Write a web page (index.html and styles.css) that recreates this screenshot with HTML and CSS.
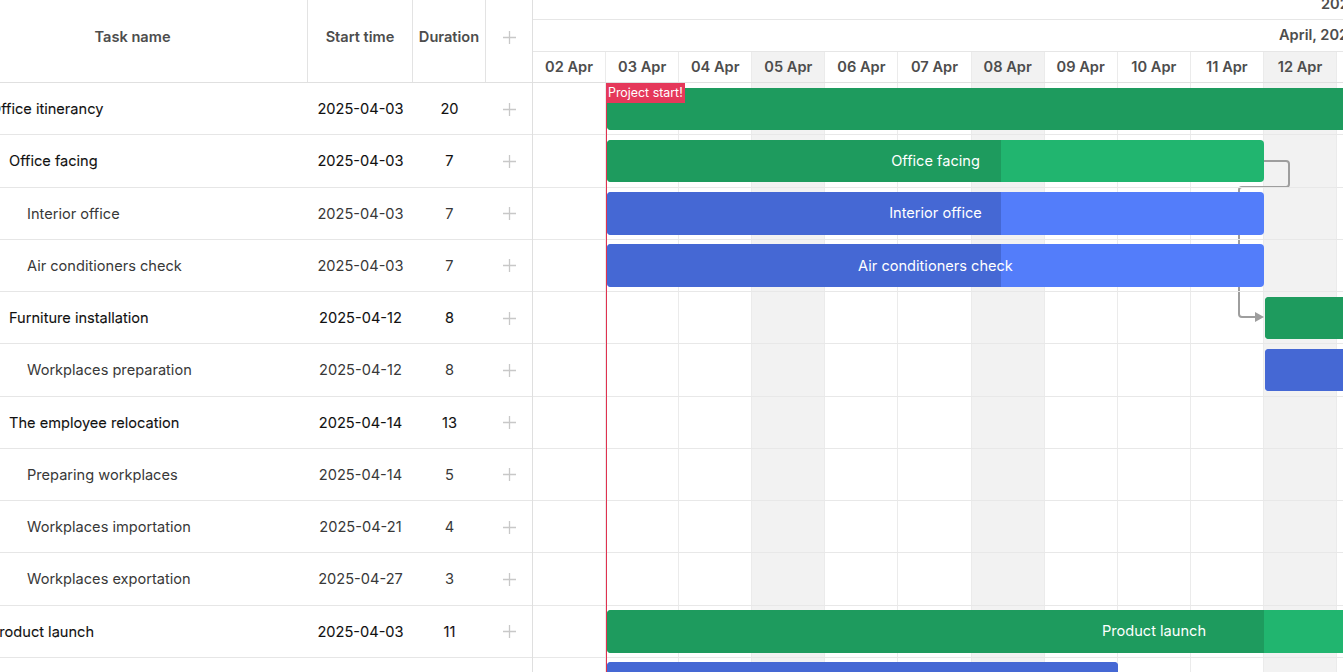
FILE: index.html
```html
<!DOCTYPE html>
<html lang="en">
<head>
  <meta charset="UTF-8">
  <meta name="viewport" content="width=device-width, initial-scale=1.0">
  <title>Gantt</title>
  <link rel="stylesheet" href="styles.css">
</head>
<body>
  <div class="gantt">
    <div class="grid">
      <div class="grid-inner">
        <div class="grid-head">
          <div class="cell col-name">Task name</div>
          <div class="cell col-start">Start time</div>
          <div class="cell col-dur">Duration</div>
          <div class="cell col-add"><svg class="plus" viewBox="0 0 14 14"><path d="M7 0v14M0 7h14"/></svg></div>
        </div>
        <div class="grid-row parent">
          <div class="cell col-name lvl0">Office itinerancy</div>
          <div class="cell col-start">2025-04-03</div>
          <div class="cell col-dur">20</div>
          <div class="cell col-add"><svg class="plus" viewBox="0 0 14 14"><path d="M7 0v14M0 7h14"/></svg></div>
        </div>
        <div class="grid-row parent">
          <div class="cell col-name lvl1">Office facing</div>
          <div class="cell col-start">2025-04-03</div>
          <div class="cell col-dur">7</div>
          <div class="cell col-add"><svg class="plus" viewBox="0 0 14 14"><path d="M7 0v14M0 7h14"/></svg></div>
        </div>
        <div class="grid-row">
          <div class="cell col-name lvl2">Interior office</div>
          <div class="cell col-start">2025-04-03</div>
          <div class="cell col-dur">7</div>
          <div class="cell col-add"><svg class="plus" viewBox="0 0 14 14"><path d="M7 0v14M0 7h14"/></svg></div>
        </div>
        <div class="grid-row">
          <div class="cell col-name lvl2">Air conditioners check</div>
          <div class="cell col-start">2025-04-03</div>
          <div class="cell col-dur">7</div>
          <div class="cell col-add"><svg class="plus" viewBox="0 0 14 14"><path d="M7 0v14M0 7h14"/></svg></div>
        </div>
        <div class="grid-row parent">
          <div class="cell col-name lvl1">Furniture installation</div>
          <div class="cell col-start">2025-04-12</div>
          <div class="cell col-dur">8</div>
          <div class="cell col-add"><svg class="plus" viewBox="0 0 14 14"><path d="M7 0v14M0 7h14"/></svg></div>
        </div>
        <div class="grid-row">
          <div class="cell col-name lvl2">Workplaces preparation</div>
          <div class="cell col-start">2025-04-12</div>
          <div class="cell col-dur">8</div>
          <div class="cell col-add"><svg class="plus" viewBox="0 0 14 14"><path d="M7 0v14M0 7h14"/></svg></div>
        </div>
        <div class="grid-row parent">
          <div class="cell col-name lvl1">The employee relocation</div>
          <div class="cell col-start">2025-04-14</div>
          <div class="cell col-dur">13</div>
          <div class="cell col-add"><svg class="plus" viewBox="0 0 14 14"><path d="M7 0v14M0 7h14"/></svg></div>
        </div>
        <div class="grid-row">
          <div class="cell col-name lvl2">Preparing workplaces</div>
          <div class="cell col-start">2025-04-14</div>
          <div class="cell col-dur">5</div>
          <div class="cell col-add"><svg class="plus" viewBox="0 0 14 14"><path d="M7 0v14M0 7h14"/></svg></div>
        </div>
        <div class="grid-row">
          <div class="cell col-name lvl2">Workplaces importation</div>
          <div class="cell col-start">2025-04-21</div>
          <div class="cell col-dur">4</div>
          <div class="cell col-add"><svg class="plus" viewBox="0 0 14 14"><path d="M7 0v14M0 7h14"/></svg></div>
        </div>
        <div class="grid-row">
          <div class="cell col-name lvl2">Workplaces exportation</div>
          <div class="cell col-start">2025-04-27</div>
          <div class="cell col-dur">3</div>
          <div class="cell col-add"><svg class="plus" viewBox="0 0 14 14"><path d="M7 0v14M0 7h14"/></svg></div>
        </div>
        <div class="grid-row parent">
          <div class="cell col-name lvl0">Product launch</div>
          <div class="cell col-start">2025-04-03</div>
          <div class="cell col-dur">11</div>
          <div class="cell col-add"><svg class="plus" viewBox="0 0 14 14"><path d="M7 0v14M0 7h14"/></svg></div>
        </div>
        <div class="grid-row"></div>
      </div>
    </div>

    <div class="chart">
      <div class="scale">
        <div class="scale-year">2025</div>
        <div class="scale-month">April, 2025</div>
        <div class="scale-days">
          <div class="day">02 Apr</div>
          <div class="day">03 Apr</div>
          <div class="day">04 Apr</div>
          <div class="day shade">05 Apr</div>
          <div class="day">06 Apr</div>
          <div class="day">07 Apr</div>
          <div class="day shade">08 Apr</div>
          <div class="day">09 Apr</div>
          <div class="day">10 Apr</div>
          <div class="day">11 Apr</div>
          <div class="day shade">12 Apr</div>
          <div class="day"></div>
        </div>
      </div>

      <div class="data">
        <div class="columns">
          <div class="col"></div>
          <div class="col"></div>
          <div class="col"></div>
          <div class="col shade"></div>
          <div class="col"></div>
          <div class="col"></div>
          <div class="col shade"></div>
          <div class="col"></div>
          <div class="col"></div>
          <div class="col"></div>
          <div class="col shade"></div>
          <div class="col"></div>
        </div>

        <svg class="links" width="810" height="600">
          <path d="M731 78H753Q756 78 756 81V101Q756 104 753 104H709Q706 104 706 107V231Q706 234 709 234H724"/>
          <polygon points="722,229 731,234 722,239"/>
        </svg>

        <div class="row">
          <div class="bar green" style="left:74px;width:1300px"><div class="progress" style="width:1300px"></div></div>
        </div>
        <div class="row">
          <div class="bar green" style="left:74px;width:657px"><div class="progress" style="width:394px"></div><span class="bar-text">Office facing</span></div>
        </div>
        <div class="row">
          <div class="bar blue" style="left:74px;width:657px"><div class="progress" style="width:394px"></div><span class="bar-text">Interior office</span></div>
        </div>
        <div class="row">
          <div class="bar blue" style="left:74px;width:657px"><div class="progress" style="width:394px"></div><span class="bar-text">Air conditioners check</span></div>
        </div>
        <div class="row">
          <div class="bar green" style="left:732px;width:585px"><div class="progress" style="width:585px"></div></div>
        </div>
        <div class="row">
          <div class="bar blue" style="left:732px;width:585px"><div class="progress" style="width:585px"></div></div>
        </div>
        <div class="row"></div>
        <div class="row"></div>
        <div class="row"></div>
        <div class="row"></div>
        <div class="row">
          <div class="bar green" style="left:74px;width:1094px"><div class="progress" style="width:657px"></div><span class="bar-text">Product launch</span></div>
        </div>
        <div class="row">
          <div class="bar blue" style="left:74px;width:511px"><div class="progress" style="width:511px"></div></div>
        </div>

        <div class="marker">
          <div class="marker-line"></div>
          <div class="marker-label">Project start!</div>
        </div>
      </div>
    </div>
  </div>
</body>
</html>
```

FILE: styles.css
```css
* {
  box-sizing: border-box;
}
body {
  margin: 0;
  font-family: Inter, "Noto Sans", sans-serif;
  font-size: 14.6px;
  color: #383838;
  background: white;
  overflow: hidden;
}
.gantt {
  display: flex;
  height: 672px;
  overflow: hidden;
}

/* grid */
.grid {
  width: 533px;
  flex: none;
  overflow: hidden;
  border-right: 1px solid #dfdfdf;
}
.grid-inner {
  margin-left: -42px;
  width: 574px;
}
.grid-head {
  display: flex;
  height: 83px;
  border-bottom: 1px solid #e0e0e0;
}
.grid-head .cell {
  display: flex;
  align-items: center;
  justify-content: center;
  padding-bottom: 8px;
  font-weight: 600;
  color: #4d4d4d;
}
.grid-head .col-name,
.grid-head .col-start,
.grid-head .col-dur {
  border-right: 1px solid #e3e3e3;
}
.col-name {
  width: 350px;
}
.col-start {
  width: 105px;
}
.col-dur {
  width: 73px;
}
.col-add {
  width: 46px;
}
.grid-row {
  display: flex;
  align-items: center;
  height: 52.25px;
  padding-top: 1px;
  border-bottom: 1px solid #e6e6e6;
}
.grid-row .cell {
  white-space: nowrap;
}
.grid-row .col-start,
.grid-row .col-dur,
.grid-row .col-add {
  text-align: center;
}
.grid-row.parent {
  color: #111;
  -webkit-text-stroke: 0.1px #111;
}
.col-add {
  display: flex;
  justify-content: center;
  align-items: center;
}
.lvl0 {
  padding-left: 32px;
}
.lvl1 {
  padding-left: 51px;
}
.lvl2 {
  padding-left: 69px;
}
.plus {
  width: 13px;
  height: 13px;
  fill: none;
  stroke: #c8c8c8;
  stroke-width: 1.4;
}

/* chart */
.chart {
  flex: 1;
  overflow: hidden;
}
.scale {
  font-weight: 600;
  color: #4d4d4d;
  white-space: nowrap;
}
.scale-year {
  height: 20px;
  line-height: 8px;
  padding-left: 788px;
  border-bottom: 1px solid #e6e6e6;
  overflow: hidden;
}
.scale-month {
  height: 32px;
  line-height: 31px;
  padding-left: 746px;
  border-bottom: 1px solid #e6e6e6;
}
.scale-days {
  display: flex;
  height: 31px;
  border-bottom: 1px solid #e0e0e0;
}
.day {
  flex: none;
  width: 73.1px;
  line-height: 30px;
  text-align: center;
  border-right: 1px solid #ebebeb;
}
.shade {
  background: #f2f2f2;
}
.data {
  position: relative;
  height: 589px;
}
.columns {
  position: absolute;
  top: 0;
  left: 0;
  bottom: 0;
  display: flex;
}
.col {
  flex: none;
  width: 73.1px;
  border-right: 1px solid #ebebeb;
}
.links {
  position: absolute;
  top: 0;
  left: 0;
}
.links path {
  fill: none;
  stroke: #9e9e9e;
  stroke-width: 2;
}
.links polygon {
  fill: #9e9e9e;
}
.row {
  position: relative;
  height: 52.25px;
  border-bottom: 1px solid #e8e8e8;
}
.bar {
  position: absolute;
  top: 4.5px;
  height: 42.5px;
  border-radius: 4px;
  overflow: hidden;
  display: flex;
  align-items: center;
  justify-content: center;
}
.bar.green {
  background: #21b56f;
}
.bar.green .progress {
  background: #1e9b5e;
}
.bar.blue {
  background: #537dfa;
}
.bar.blue .progress {
  background: #4568d4;
}
.progress {
  position: absolute;
  top: 0;
  left: 0;
  bottom: 0;
}
.bar-text {
  position: relative;
  color: white;
  white-space: nowrap;
}
.marker {
  position: absolute;
  top: 0;
  left: 73px;
  bottom: 0;
}
.marker-line {
  position: absolute;
  top: 0;
  bottom: 0;
  left: 0;
  width: 1px;
  background: #e0324f;
}
.marker-label {
  position: absolute;
  top: 0;
  left: 0;
  padding: 0 2px;
  height: 20px;
  line-height: 20px;
  font-size: 12.4px;
  color: white;
  background: #e5385a;
  white-space: nowrap;
}
```
